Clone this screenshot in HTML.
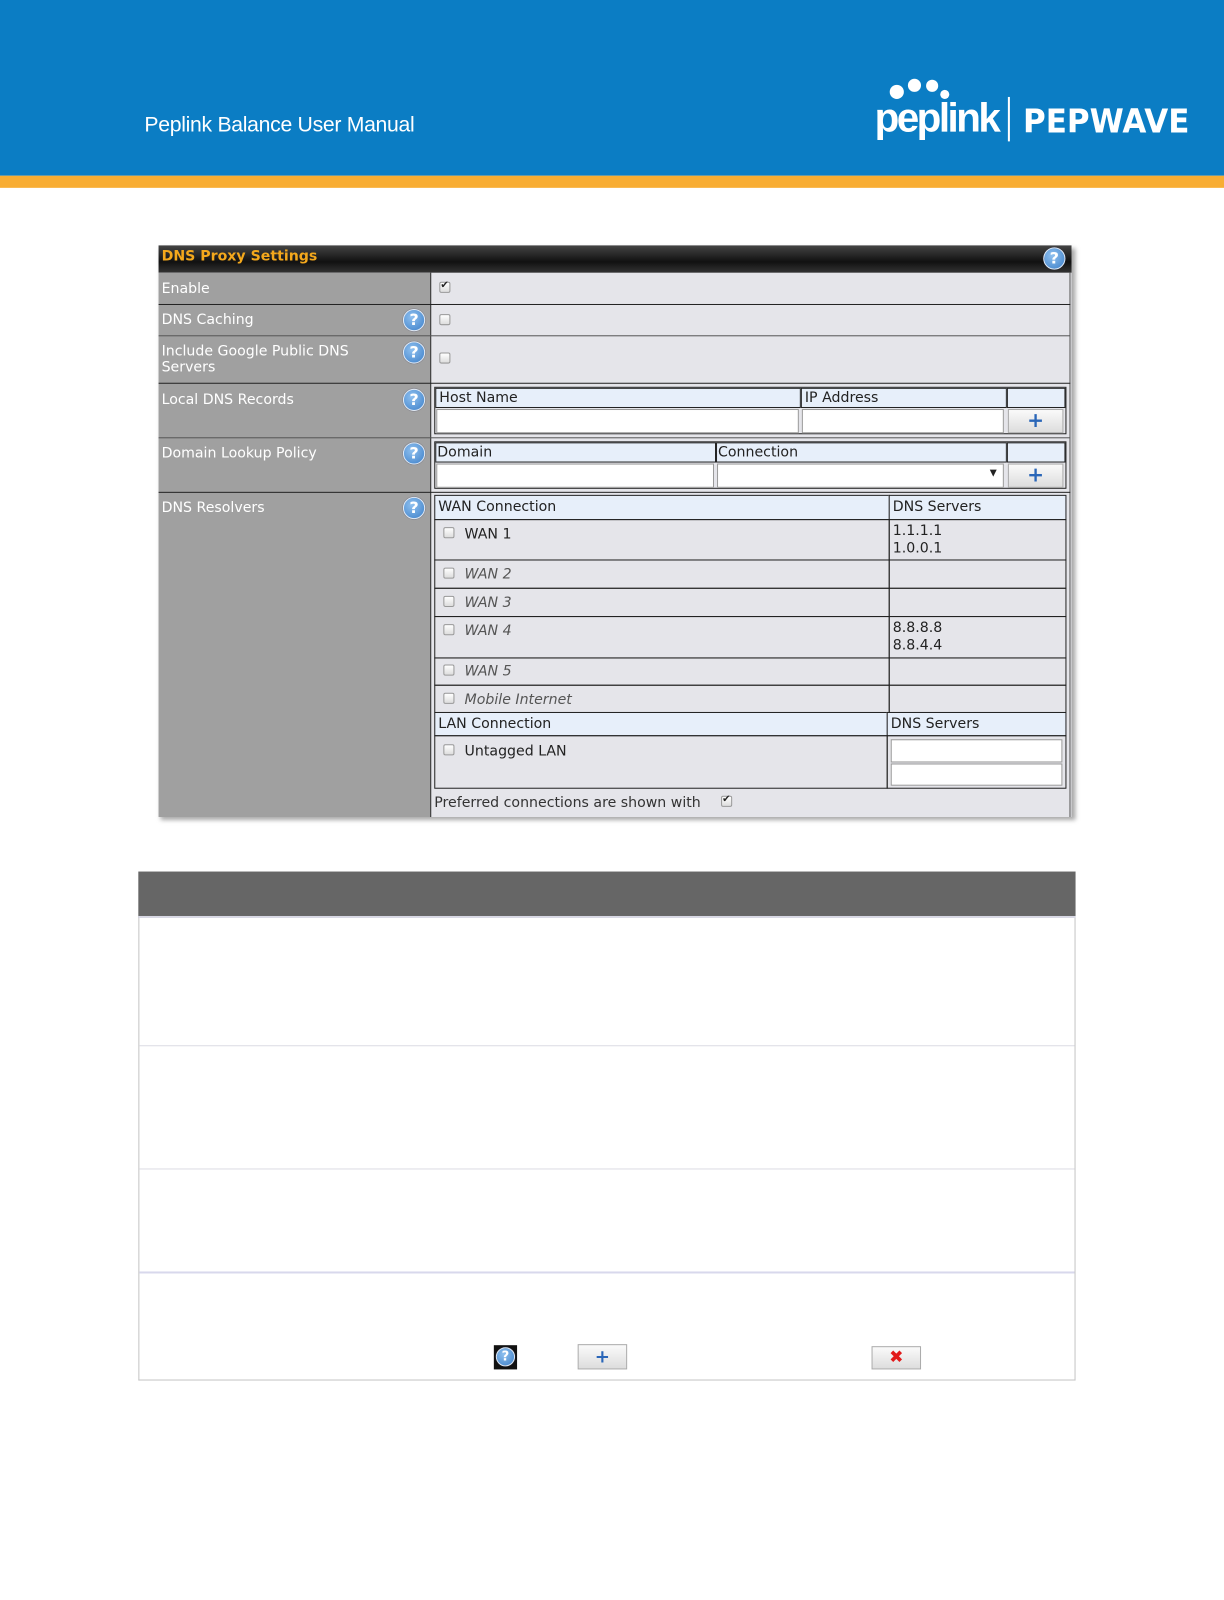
<!DOCTYPE html>
<html><head><meta charset="utf-8">
<style>
*{margin:0;padding:0;box-sizing:border-box}
body{width:1224px;height:1584px;background:#fff;position:relative;overflow:hidden;font-family:"DejaVu Sans","Liberation Sans",sans-serif;font-size:13px;color:#222}
#w{position:absolute;left:0;top:0;width:1212px;height:1584px;transform:scale(1.0099);transform-origin:0 0}
.a{position:absolute}
.hl{position:absolute;height:1px;background:#222}
.lbl{position:absolute;left:3px;color:#fff;font-size:14px;line-height:16px}
.help{position:absolute;width:22px;height:22px;border-radius:50%;background:radial-gradient(circle at 40% 35%,#8fc0ef,#3c7fc8);border:1px solid #dfe9f5;color:#fff;font:bold 16px/20px "DejaVu Sans",sans-serif;text-align:center;box-shadow:0 0 1px #335}
.cb{position:absolute;width:11px;height:11px;border:1px solid #999;border-radius:2px;background:linear-gradient(#fff,#ddd)}
.cb.k::after{content:"✔";position:absolute;left:0;top:-3px;font-size:10px;color:#222}
.th{position:absolute;background:#e7effa;border:1px solid #222;font-size:14px;line-height:18px;padding-left:3px}
.in{position:absolute;background:#fff;border:1px solid #999}
.btn{position:absolute;background:linear-gradient(#fafafa,#ddd);border:1px solid #aaa;color:#2a66b8;font:bold 20px/20px "DejaVu Sans",sans-serif;text-align:center}
.cell{position:absolute;border:1px solid #222;font-size:14px;line-height:17px}
.it{font-style:italic;color:#555}
</style></head><body><div id="w">
<!-- header -->
<div class="a" style="left:0;top:0;width:1224px;height:174px;background:#0b7dc4"></div>
<div class="a" style="left:0;top:174px;width:1224px;height:12px;background:#f8ad33"></div>
<div class="a" style="left:143px;top:112px;color:#fff;font:21px 'Liberation Sans',sans-serif;letter-spacing:-0.3px">Peplink Balance User Manual</div>
<div class="a" style="left:881px;top:84px;width:14px;height:14px;border-radius:50%;background:#fff"></div>
<div class="a" style="left:899px;top:78px;width:13px;height:13px;border-radius:50%;background:#fff"></div>
<div class="a" style="left:917px;top:79px;width:12px;height:12px;border-radius:50%;background:#fff"></div>
<div class="a" style="left:931px;top:89px;width:9px;height:9px;border-radius:50%;background:#fff"></div>
<div class="a" style="left:866px;top:94px;color:#fff;font:bold 40px/46px 'Liberation Sans',sans-serif;letter-spacing:-2.5px">peplink</div>
<div class="a" style="left:998px;top:96px;width:2px;height:44px;background:#fff"></div>
<div class="a" style="left:1013px;top:101px;color:#fff;font:bold 33px/38px 'DejaVu Sans',sans-serif;transform:scaleX(0.93);transform-origin:left">PEPWAVE</div>

<!-- panel -->
<div class="a" style="left:159px;top:246px;width:906px;height:566px;background:#aaa;filter:blur(2px)"></div>
<div class="a" style="left:157px;top:243px;width:904px;height:566px;background:#e5e5ea"></div>
<div class="a" style="left:157px;top:243px;width:904px;height:27px;background:linear-gradient(#444,#111 60%,#333)"></div>
<div class="a" style="left:160px;top:246px;color:#f4a81c;font-weight:bold;font-size:14px">DNS Proxy Settings</div>
<div class="help" style="left:1033px;top:245px">?</div>
<div class="a" style="left:157px;top:270px;width:269px;height:539px;background:#a0a0a0"></div>
<div class="a" style="left:426px;top:270px;width:1px;height:539px;background:#222"></div>
<div class="a" style="left:1059px;top:270px;width:1px;height:539px;background:#555"></div>
<div class="hl" style="left:157px;top:301px;width:903px"></div>
<div class="hl" style="left:157px;top:332px;width:903px;background:#555"></div>
<div class="hl" style="left:157px;top:379px;width:903px"></div>
<div class="hl" style="left:157px;top:433px;width:903px;background:#555"></div>
<div class="hl" style="left:157px;top:487px;width:903px"></div>

<div class="lbl" style="left:160px;top:278px">Enable</div>
<div class="lbl" style="left:160px;top:309px">DNS Caching</div>
<div class="lbl" style="left:160px;top:340px">Include Google Public DNS<br>Servers</div>
<div class="lbl" style="left:160px;top:388px">Local DNS Records</div>
<div class="lbl" style="left:160px;top:441px">Domain Lookup Policy</div>
<div class="lbl" style="left:160px;top:495px">DNS Resolvers</div>
<div class="help" style="left:399px;top:306px">?</div>
<div class="help" style="left:399px;top:338px">?</div>
<div class="help" style="left:399px;top:385px">?</div>
<div class="help" style="left:399px;top:438px">?</div>
<div class="help" style="left:399px;top:492px">?</div>

<div class="cb k" style="left:435px;top:279px"></div>
<div class="cb" style="left:435px;top:311px"></div>
<div class="cb" style="left:435px;top:349px"></div>

<div class="a" style="left:430px;top:383px;width:626px;height:47px;border:1px solid #222"></div>
<div class="th" style="left:431px;top:384px;width:362px;height:20px">Host Name</div>
<div class="th" style="left:793px;top:384px;width:204px;height:20px">IP Address</div>
<div class="th" style="left:997px;top:384px;width:58px;height:20px"></div>
<div class="in" style="left:432px;top:405px;width:359px;height:24px"></div>
<div class="in" style="left:794px;top:405px;width:200px;height:24px"></div>
<div class="btn" style="left:998px;top:405px;width:55px;height:24px">+</div>

<div class="a" style="left:430px;top:437px;width:626px;height:47px;border:1px solid #222"></div>
<div class="th" style="left:431px;top:438px;width:278px;height:20px;padding-left:1px">Domain</div>
<div class="th" style="left:709px;top:438px;width:288px;height:20px;padding-left:1px">Connection</div>
<div class="th" style="left:997px;top:438px;width:58px;height:20px"></div>
<div class="in" style="left:432px;top:459px;width:275px;height:24px"></div>
<div class="in" style="left:710px;top:459px;width:284px;height:24px"><span style="position:absolute;right:6px;top:4px;font-size:9px">▼</span></div>
<div class="btn" style="left:998px;top:459px;width:55px;height:24px">+</div>

<div class="th" style="left:430px;top:490px;width:451px;height:25px;line-height:23px">WAN Connection</div>
<div class="th" style="left:880px;top:490px;width:176px;height:25px;line-height:23px">DNS Servers</div>
<div class="cell" style="left:430px;top:514px;width:451px;height:41px"></div>
<div class="cell" style="left:880px;top:514px;width:176px;height:41px"></div>
<div class="cell" style="left:430px;top:554px;width:451px;height:29px"></div>
<div class="cell" style="left:880px;top:554px;width:176px;height:29px"></div>
<div class="cell" style="left:430px;top:582px;width:451px;height:29px"></div>
<div class="cell" style="left:880px;top:582px;width:176px;height:29px"></div>
<div class="cell" style="left:430px;top:610px;width:451px;height:42px"></div>
<div class="cell" style="left:880px;top:610px;width:176px;height:42px"></div>
<div class="cell" style="left:430px;top:651px;width:451px;height:28px"></div>
<div class="cell" style="left:880px;top:651px;width:176px;height:28px"></div>
<div class="cell" style="left:430px;top:678px;width:451px;height:28px"></div>
<div class="cell" style="left:880px;top:678px;width:176px;height:28px"></div>
<div class="th" style="left:430px;top:705px;width:449px;height:24px;line-height:22px">LAN Connection</div>
<div class="th" style="left:878px;top:705px;width:178px;height:24px;line-height:22px">DNS Servers</div>
<div class="cell" style="left:430px;top:728px;width:449px;height:53px"></div>
<div class="cell" style="left:878px;top:728px;width:178px;height:53px"></div>
<div class="in" style="left:882px;top:732px;width:170px;height:23px"></div>
<div class="in" style="left:882px;top:756px;width:170px;height:22px"></div>

<div class="cb" style="left:439px;top:522px"></div><div class="a" style="left:460px;top:521px;font-size:14px">WAN 1</div>
<div class="a" style="left:884px;top:518px;font-size:14px;line-height:17px">1.1.1.1<br>1.0.0.1</div>
<div class="cb" style="left:439px;top:562px"></div><div class="a it" style="left:460px;top:561px;font-size:14px">WAN 2</div>
<div class="cb" style="left:439px;top:590px"></div><div class="a it" style="left:460px;top:589px;font-size:14px">WAN 3</div>
<div class="cb" style="left:439px;top:618px"></div><div class="a it" style="left:460px;top:617px;font-size:14px">WAN 4</div>
<div class="a" style="left:884px;top:614px;font-size:14px;line-height:17px">8.8.8.8<br>8.8.4.4</div>
<div class="cb" style="left:439px;top:658px"></div><div class="a it" style="left:460px;top:657px;font-size:14px">WAN 5</div>
<div class="cb" style="left:439px;top:686px"></div><div class="a it" style="left:460px;top:685px;font-size:14px">Mobile Internet</div>
<div class="cb" style="left:439px;top:737px"></div><div class="a" style="left:460px;top:736px;font-size:14px">Untagged LAN</div>
<div class="a" style="left:430px;top:787px;font-size:14px;color:#333">Preferred connections are shown with</div>
<div class="cb k" style="left:714px;top:788px"></div>

<div class="a" style="left:137px;top:863px;width:928px;height:504px;border:1px solid #c4c4c4;border-top:none"></div>
<div class="a" style="left:137px;top:863px;width:928px;height:46px;background:#666;border-bottom:2px solid #d8d8e4"></div>
<div class="a" style="left:138px;top:1035px;width:926px;height:1px;background:#dcdce4"></div>
<div class="a" style="left:138px;top:1157px;width:926px;height:1px;background:#dcdce4"></div>
<div class="a" style="left:138px;top:1259px;width:926px;height:2px;background:#d8d8ec"></div>
<div class="a" style="left:489px;top:1332px;width:23px;height:24px;background:#111"><div class="help" style="left:2px;top:2px;width:19px;height:19px;font-size:13px;line-height:17px">?</div></div>
<div class="btn" style="left:572px;top:1331px;width:49px;height:25px;font-size:18px;line-height:23px">+</div>
<div class="btn" style="left:863px;top:1333px;width:49px;height:23px;color:#e21a1a;font-size:17px;line-height:21px">✖</div>
</div></body></html>
